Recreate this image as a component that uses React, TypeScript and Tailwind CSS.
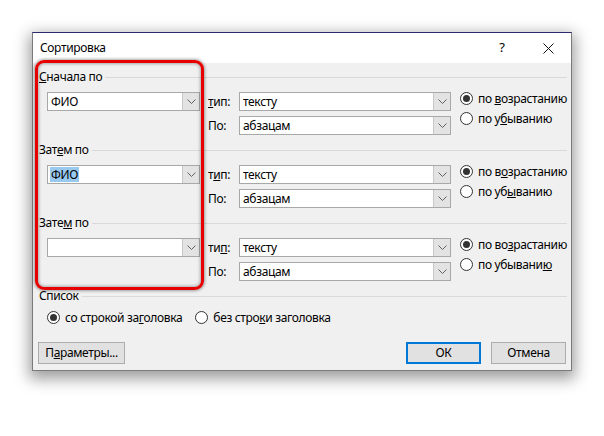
import React from 'react';

const font = { fontFamily: '"Noto Sans", "Open Sans", sans-serif' };

function Chevron() {
    return (
        <svg width="9" height="5" viewBox="0 0 9 5" fill="none" stroke="#606060" strokeWidth="1">
            <path d="M0.5 0.5 L4.5 4.5 L8.5 0.5" />
        </svg>
    );
}

function Combo({ value, width, selected }: { value: string; width: string; selected?: boolean }) {
    return (
        <div className={`${width} h-[19px] flex border border-[#a8a8a8] bg-white`}>
            <div className="flex-1 flex items-center pl-[2px] overflow-hidden">
                {value && (
                    <span className={selected ? 'bg-[#99c9ef] px-[1px] leading-[15px]' : 'px-[1px] leading-[15px]'}>{value}</span>
                )}
            </div>
            <div className="w-[17px] flex items-center justify-center bg-[#e3e3e3] border-l border-[#c8c8c8]">
                <Chevron />
            </div>
        </div>
    );
}

function Radio({ checked, children }: { checked?: boolean; children: React.ReactNode }) {
    return (
        <div className="flex items-center h-[13px] gap-[5px]">
            <div className="w-[13px] h-[13px] rounded-full border border-[#333] bg-white flex items-center justify-center shrink-0">
                {checked && <div className="w-[7px] h-[7px] rounded-full bg-[#333]" />}
            </div>
            <span className="leading-[13px] whitespace-nowrap">{children}</span>
        </div>
    );
}

function GroupLabel({ children }: { children: React.ReactNode }) {
    return (
        <div className="h-[16px] flex items-center">
            <span className="leading-[16px] whitespace-nowrap">{children}</span>
            <div className="flex-1 h-px bg-[#d9d9d9] ml-[3px]" />
        </div>
    );
}

function SortGroup({
    label, first, selected, typeLabel, asc, desc,
}: {
    label: React.ReactNode; first: string; selected?: boolean; typeLabel: React.ReactNode; asc: React.ReactNode; desc: React.ReactNode;
}) {
    return (
        <div className="mb-[7px]">
            <GroupLabel>{label}</GroupLabel>
            <div className="flex mt-[7px]">
                <div className="pl-[8px]">
                    <Combo value={first} width="w-[153px]" selected={selected} />
                </div>
                <div className="ml-[8px] flex flex-col gap-[5px]">
                    <div className="flex items-center">
                        <span className="w-[31px]">{typeLabel}</span>
                        <Combo value="тексту" width="w-[212px]" />
                    </div>
                    <div className="flex items-center">
                        <span className="w-[31px]">По:</span>
                        <Combo value="абзацам" width="w-[212px]" />
                    </div>
                </div>
                <div className="ml-[9px] flex flex-col gap-[7px]">
                    <Radio checked>{asc}</Radio>
                    <Radio>{desc}</Radio>
                </div>
            </div>
        </div>
    );
}

export default function App() {
    return (
        <div className="w-[604px] h-[436px] bg-white pt-[32px] pl-[32px] text-[12px] tracking-[-0.35px] text-black" style={font}>
            <div className="relative w-[540px] h-[339px] border border-[#7a7a7a] border-t-[#2b2b6e] bg-[#f0f0f0] shadow-[0_5px_14px_3px_rgba(0,0,0,0.38)]">
                {/* title bar */}
                <div className="h-[30px] bg-white flex items-center">
                    <span className="pl-[7px] flex-1">Сортировка</span>
                    <div className="w-[46px] h-full flex items-center justify-center text-[13px]">?</div>
                    <div className="w-[46px] h-full flex items-center justify-center">
                        <svg width="11" height="11" viewBox="0 0 11 11" stroke="#111" strokeWidth="1">
                            <path d="M0.5 0.5 L10.5 10.5 M10.5 0.5 L0.5 10.5" />
                        </svg>
                    </div>
                </div>

                {/* body */}
                <div className="pt-[6px] pl-[6px] pr-[4px]">
                    <SortGroup
                        label={<><u>С</u>начала по</>}
                        first="ФИО"
                        typeLabel={<><u>т</u>ип:</>}
                        asc={<>по <u>в</u>озрастанию</>}
                        desc={<>по у<u>б</u>ыванию</>}
                    />
                    <SortGroup
                        label={<>Зат<u>е</u>м по</>}
                        first="ФИО"
                        selected
                        typeLabel={<>т<u>и</u>п:</>}
                        asc={<>по в<u>о</u>зрастанию</>}
                        desc={<>по уб<u>ы</u>ванию</>}
                    />
                    <SortGroup
                        label={<>Зате<u>м</u> по</>}
                        first=""
                        typeLabel={<>ти<u>п</u>:</>}
                        asc={<>по во<u>з</u>растанию</>}
                        desc={<>по убывани<u>ю</u></>}
                    />

                    <GroupLabel>Список</GroupLabel>
                    <div className="flex pl-[8px] mt-[7px] gap-[13px]">
                        <Radio checked>со строкой за<u>г</u>оловка</Radio>
                        <Radio>без стро<u>к</u>и заголовка</Radio>
                    </div>

                    <div className="flex mt-[18px] ml-[-1px] mr-[1px]">
                        <button className="w-[87px] h-[22px] bg-[#e1e1e1] border border-[#adadad]">П<u>а</u>раметры...</button>
                        <div className="flex-1" />
                        <button className="w-[75px] h-[22px] bg-[#e1e1e1] border-2 border-[#0078d7]">ОК</button>
                        <button className="w-[75px] h-[22px] ml-[10px] bg-[#e1e1e1] border border-[#adadad]">Отмена</button>
                    </div>
                </div>

                {/* red highlight annotation */}
                <div className="absolute left-[2px] top-[27px] w-[169px] h-[230px] rounded-[9px] border-[3px] border-[#e60000] shadow-[0_0_3px_1px_rgba(0,0,0,0.35),inset_0_0_3px_1px_rgba(0,0,0,0.3)] pointer-events-none" />
            </div>
        </div>
    );
}
